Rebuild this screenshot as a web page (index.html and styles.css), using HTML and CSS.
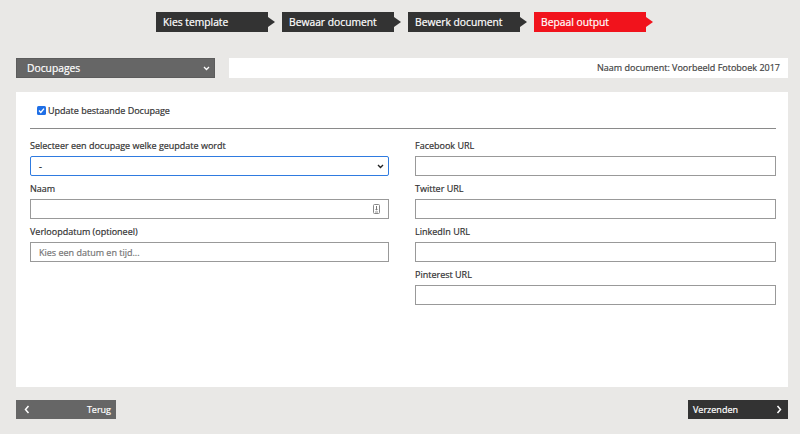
FILE: index.html
```html
<!DOCTYPE html>
<html lang="nl">
<head>
<meta charset="utf-8">
<title>Bepaal output</title>
<link rel="stylesheet" href="styles.css">
</head>
<body>
<div class="page">
  <nav class="steps">
    <div class="step">Kies template</div>
    <div class="step">Bewaar document</div>
    <div class="step">Bewerk document</div>
    <div class="step active">Bepaal output</div>
  </nav>

  <div class="toolbar">
    <div class="type-select">
      <span>Docupages</span>
      <svg class="chev" width="7" height="5" viewBox="0 0 7 5"><path d="M1 1 L3.5 3.5 L6 1" fill="none" stroke="#fff" stroke-width="1.3"/></svg>
    </div>
    <div class="docname">Naam document: Voorbeeld Fotoboek 2017</div>
  </div>

  <main class="panel">
    <label class="check-row">
      <svg class="checkbox" width="9" height="9" viewBox="0 0 9 9"><rect x="0" y="0" width="9" height="9" rx="1.5" fill="#1f6fe6"/><path d="M2 4.6 L3.8 6.4 L7 2.6" fill="none" stroke="#fff" stroke-width="1.4"/></svg>
      <span>Update bestaande Docupage</span>
    </label>
    <hr class="divider">
    <div class="columns">
      <div class="col">
        <div class="field">
          <div class="label">Selecteer een docupage welke geupdate wordt</div>
          <div class="input select">
            <span>-</span>
            <svg width="7" height="5" viewBox="0 0 7 5"><path d="M1 1 L3.5 3.5 L6 1" fill="none" stroke="#222" stroke-width="1.4"/></svg>
          </div>
        </div>
        <div class="field">
          <div class="label">Naam</div>
          <div class="input with-icon">
            <svg width="7" height="10" viewBox="0 0 7 10"><rect x="0.5" y="0.5" width="6" height="9" rx="1" fill="#fff" stroke="#888"/><path d="M3.5 2 V5.5" stroke="#777" stroke-width="1"/><path d="M2 5 L3.5 6.6 L5 5 Z" fill="#777"/><path d="M2 8 H5" stroke="#777" stroke-width="0.8"/></svg>
          </div>
        </div>
        <div class="field">
          <div class="label">Verloopdatum (optioneel)</div>
          <div class="input placeholder">Kies een datum en tijd...</div>
        </div>
      </div>
      <div class="col">
        <div class="field">
          <div class="label">Facebook URL</div>
          <div class="input"></div>
        </div>
        <div class="field">
          <div class="label">Twitter URL</div>
          <div class="input"></div>
        </div>
        <div class="field">
          <div class="label">LinkedIn URL</div>
          <div class="input"></div>
        </div>
        <div class="field">
          <div class="label">Pinterest URL</div>
          <div class="input"></div>
        </div>
      </div>
    </div>
  </main>

  <div class="actions">
    <button class="btn back">
      <svg width="6" height="9" viewBox="0 0 6 9"><path d="M4.5 1 L1.5 4.5 L4.5 8" fill="none" stroke="#fff" stroke-width="1.5"/></svg>
      <span>Terug</span>
    </button>
    <button class="btn next">
      <span>Verzenden</span>
      <svg width="6" height="9" viewBox="0 0 6 9"><path d="M1.5 1 L4.5 4.5 L1.5 8" fill="none" stroke="#fff" stroke-width="1.5"/></svg>
    </button>
  </div>
</div>
</body>
</html>
```

FILE: styles.css
```css
* { box-sizing: border-box; }
html, body {
  margin: 0;
  padding: 0;
  background: #e9e8e6;
  font-family: "Open Sans", "Liberation Sans", sans-serif;
  color: #333;
}
.page {
  width: 800px;
  height: 434px;
  padding: 12px 12px 0 16px;
  -webkit-text-stroke: 0.2px currentColor;
}
.steps {
  display: flex;
  gap: 14px;
  padding-left: 140px;
  height: 20px;
}
.step {
  position: relative;
  width: 112px;
  height: 20px;
  line-height: 20px;
  padding-left: 7px;
  background: #333333;
  color: #fff;
  font-size: 10.3px;
}
.step::after {
  content: "";
  position: absolute;
  right: -7px;
  top: 5px;
  border-left: 7px solid #333333;
  border-top: 5px solid transparent;
  border-bottom: 5px solid transparent;
}
.step.active { background: #f1131c; }
.step.active::after { border-left-color: #f1131c; }

.toolbar {
  display: flex;
  gap: 14px;
  margin-top: 26px;
  height: 20px;
}
.type-select {
  width: 199px;
  height: 20px;
  background: #666666;
  color: #fff;
  font-size: 10.3px;
  display: flex;
  align-items: center;
  justify-content: space-between;
  padding: 0 4px 0 10px;
  border: 1px solid #5c5c5c;
}
.docname {
  flex: 1;
  background: #fff;
  height: 20px;
  line-height: 20px;
  text-align: right;
  padding-right: 8px;
  font-size: 9px;
  color: #444;
}

.panel {
  margin-top: 14px;
  height: 295px;
  background: #fff;
  padding: 10px 12px 0 14px;
}
.check-row {
  display: flex;
  align-items: center;
  gap: 2px;
  height: 16px;
  padding-left: 7px;
  font-size: 9px;
  color: #333;
}
.checkbox { flex: none; }
.divider {
  margin: 10px 0 0 0;
  border: 0;
  border-top: 1px solid #8a8a8a;
  height: 0;
}
.columns {
  display: flex;
  gap: 26px;
  margin-top: 10px;
}
.col { width: 359px; }
.col + .col { width: 361px; }
.field { margin-bottom: 6px; }
.label {
  font-size: 9px;
  line-height: 14px;
  margin-bottom: 3px;
  color: #333;
}
.input {
  height: 20px;
  border: 1px solid #999;
  background: #fff;
  display: flex;
  align-items: center;
  font-size: 9px;
  padding: 0 8px;
}
.input.select {
  border: 1px solid #2f7be0;
  border-radius: 2px;
  justify-content: space-between;
  padding: 0 4px 0 8px;
  color: #222;
}
.input.with-icon {
  justify-content: flex-end;
  padding-right: 8px;
}
.input.placeholder { color: #757575; }

.actions {
  display: flex;
  justify-content: space-between;
  margin-top: 13px;
}
.btn {
  width: 100px;
  height: 19px;
  border: 0;
  margin: 0;
  display: flex;
  align-items: center;
  justify-content: space-between;
  font-family: "Open Sans", "Liberation Sans", sans-serif;
  font-size: 9px;
  color: #fff;
  cursor: pointer;
}
.btn.back {
  background: #666666;
  padding: 0 5px 0 8px;
}
.btn.next {
  background: #333333;
  padding: 0 6px 0 5px;
}
```
